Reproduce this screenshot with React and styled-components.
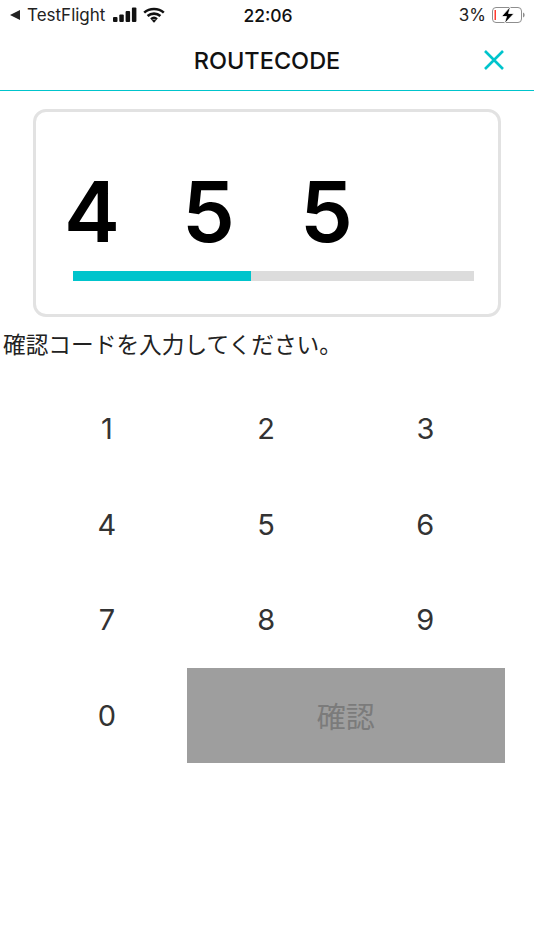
import React from "react";
import styled, { createGlobalStyle } from "styled-components";

const GlobalStyle = createGlobalStyle`
  html, body {
    margin: 0;
    padding: 0;
    background: #fff;
  }
  body {
    font-family: "Inter", "Liberation Sans", "Noto Sans CJK JP", sans-serif;
  }
`;

const Page = styled.div`
  width: 534px;
  height: 950px;
  overflow: hidden;
  background: #fff;
`;

const StatusBar = styled.div`
  height: 30px;
  display: grid;
  grid-template-columns: 1fr auto 1fr;
  align-items: center;
  padding: 0 8px 0 10px;
  font-size: 17px;
  color: #222;
`;

const StatusLeft = styled.div`
  display: flex;
  align-items: center;
  gap: 6px;
`;

const StatusRight = styled.div`
  display: flex;
  align-items: center;
  justify-content: flex-end;
  gap: 6px;
`;

const BackArrow = styled.span`
  width: 0;
  height: 0;
  margin-right: 1px;
  border-top: 5px solid transparent;
  border-bottom: 5px solid transparent;
  border-right: 10px solid #222;
`;

const AppName = styled.span`
  margin-right: 2px;
`;

const Time = styled.div`
  font-size: 17.5px;
  font-weight: 500;
  color: #111;
`;

const Header = styled.header`
  height: 60px;
  display: grid;
  grid-template-columns: 1fr auto 1fr;
  align-items: center;
  border-bottom: 1px solid #00c4cc;
`;

const Title = styled.h1`
  grid-column: 2;
  margin: 0;
  font-size: 23.5px;
  font-weight: 500;
  color: #111;
`;

const CloseButton = styled.button`
  grid-column: 3;
  justify-self: end;
  display: flex;
  margin-right: 29px;
  padding: 0;
  border: none;
  background: none;
`;

const CodeCard = styled.section`
  box-sizing: border-box;
  width: 468px;
  height: 208px;
  margin: 18px 0 0 33px;
  padding: 50px 24px 0 37px;
  border: 3px solid #e2e2e2;
  border-radius: 13px;
`;

const Digits = styled.div`
  display: grid;
  grid-template-columns: repeat(4, 118px);
  height: 109px;
  margin-left: -9px;
`;

const Digit = styled.span`
  padding-top: 7px;
  font-family: "Inter", sans-serif;
  font-size: 84px;
  font-weight: 600;
  line-height: 86px;
  color: #000;
`;

const Progress = styled.div`
  height: 10px;
  background: #dcdcdc;
`;

const ProgressFill = styled.div`
  height: 100%;
  background: #00c4cc;
`;

const Prompt = styled.p`
  margin: 12px 0 0 3px;
  font-family: "Noto Sans CJK JP", sans-serif;
  font-size: 22.7px;
  line-height: 30px;
  color: #222;
`;

const Keypad = styled.div`
  display: grid;
  grid-template-columns: repeat(3, 159.2px);
  grid-auto-rows: 95.5px;
  margin: 22px 0 0 27.4px;
`;

const Key = styled.button`
  padding: 0;
  border: none;
  background: none;
  font-family: "Inter", sans-serif;
  font-size: 29px;
  color: #333;
`;

const ConfirmButton = styled.button`
  grid-column: span 2;
  padding: 0;
  border: none;
  background: #9e9e9e;
  font-family: "Noto Sans CJK JP", sans-serif;
  font-size: 29px;
  color: #7b7b7b;
`;

function SignalIcon() {
  return (
    <svg width="24" height="16" viewBox="0 0 24 16" fill="#111">
      <rect x="0" y="10" width="4.5" height="5" rx="1" />
      <rect x="6.3" y="7.5" width="4.5" height="7.5" rx="1" />
      <rect x="12.6" y="4" width="4.5" height="11" rx="1" />
      <rect x="18.9" y="0.5" width="4.5" height="14.5" rx="1" />
    </svg>
  );
}

function WifiIcon() {
  return (
    <svg width="22" height="16" viewBox="0 0 22 16" fill="none" stroke="#111" strokeWidth="2.6">
      <path d="M1.2 5.6C6.6 .8 15.4 .8 20.8 5.6" />
      <path d="M4.6 9C8.2 5.8 13.8 5.8 17.4 9" />
      <path d="M8 12.2C9.7 10.8 12.3 10.8 14 12.2" />
      <path d="M11 15.8L8.8 13.4C10 12.4 12 12.4 13.2 13.4Z" fill="#111" stroke="none" />
    </svg>
  );
}

function BatteryIcon() {
  return (
    <svg width="34" height="18" viewBox="0 0 34 18" fill="none">
      <rect x="0.5" y="1.5" width="29" height="15" rx="3.5" stroke="#8e8e8e" />
      <rect x="2.5" y="4" width="1.5" height="10" fill="#ff3b30" />
      <path d="M31 6.5C32.2 7 32.6 8 32.6 9C32.6 10 32.2 11 31 11.5Z" fill="#8e8e8e" />
      <path d="M18.5 0.5L9.5 10.5H14.5L12.5 17.5L22 7.5H16.5Z" fill="#000" stroke="#fff" strokeWidth="0.8" />
    </svg>
  );
}

function CloseIcon() {
  return (
    <svg width="22" height="22" viewBox="0 0 22 22" stroke="#00c4cc" strokeWidth="2.6" fill="none">
      <path d="M2 2L20 20M20 2L2 20" />
    </svg>
  );
}

const code = ["4", "5", "5"];
const keys = ["1", "2", "3", "4", "5", "6", "7", "8", "9", "0"];

export default function App() {
  return (
    <Page>
      <GlobalStyle />
      <StatusBar>
        <StatusLeft>
          <BackArrow />
          <AppName>TestFlight</AppName>
          <SignalIcon />
          <WifiIcon />
        </StatusLeft>
        <Time>22:06</Time>
        <StatusRight>
          <span>3%</span>
          <BatteryIcon />
        </StatusRight>
      </StatusBar>
      <Header>
        <Title>ROUTECODE</Title>
        <CloseButton aria-label="close">
          <CloseIcon />
        </CloseButton>
      </Header>
      <CodeCard>
        <Digits>
          {code.map((d, i) => (
            <Digit key={i}>{d}</Digit>
          ))}
        </Digits>
        <Progress>
          <ProgressFill style={{ width: `${(code.length / 6.75) * 100}%` }} />
        </Progress>
      </CodeCard>
      <Prompt>確認コードを入力してください。</Prompt>
      <Keypad>
        {keys.map((k) => (
          <Key key={k}>{k}</Key>
        ))}
        <ConfirmButton disabled>確認</ConfirmButton>
      </Keypad>
    </Page>
  );
}
